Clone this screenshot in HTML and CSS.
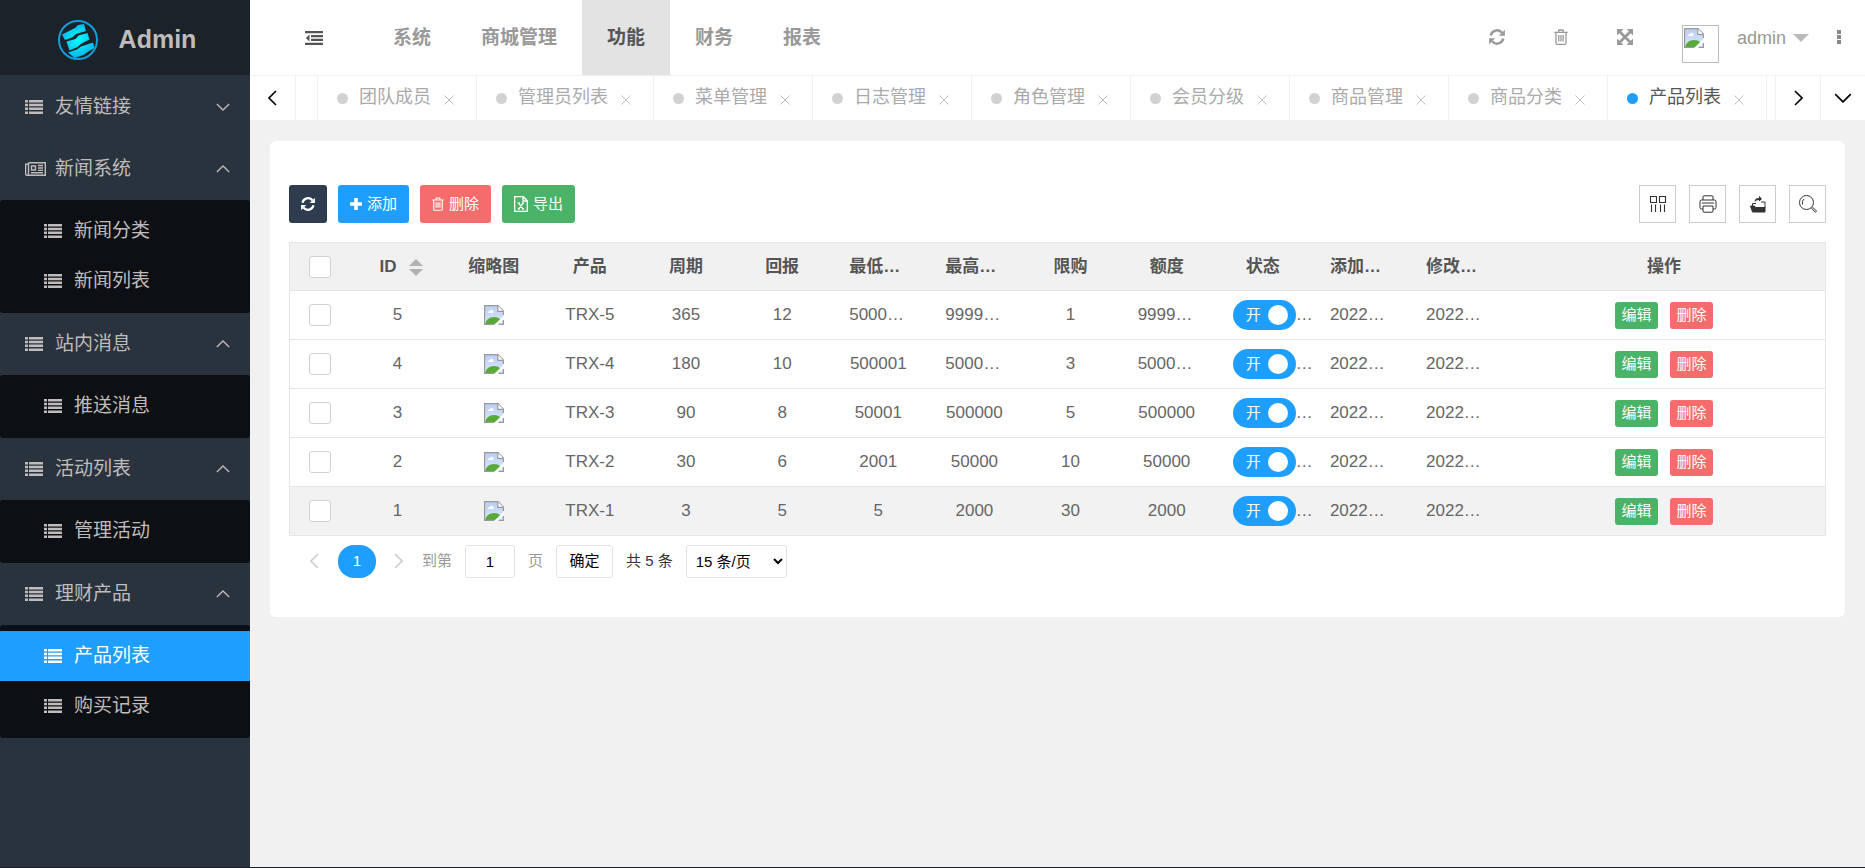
FILE: index.html
```html
<!DOCTYPE html>
<html lang="zh-CN">
<head>
<meta charset="utf-8">
<title>Admin</title>
<link rel="stylesheet" href="styles.css">
<script src="app.js" defer></script>
</head>
<body>
<svg class="defs" aria-hidden="true">
  <defs>
    <linearGradient id="sky" x1="0" y1="0" x2="0" y2="1"><stop offset="0" stop-color="#b9cdf5"/><stop offset="1" stop-color="#dfe8fa"/></linearGradient>
    <radialGradient id="glow" gradientUnits="userSpaceOnUse" cx="21" cy="21" r="18"><stop offset="0" stop-color="#0ff"/><stop offset="1" stop-color="#08b4ea"/></radialGradient>
    <symbol id="list" viewBox="0 0 18 14"><path d="M0 0h3v2.5H0zM4 0h14v2.5H4zM0 3.8h3v2.5H0zM4 3.8h14v2.5H4zM0 7.6h3v2.5H0zM4 7.6h14v2.5H4zM0 11.4h3V14H0zM4 11.4h14V14H4z" fill="currentColor"/></symbol>
    <symbol id="news" viewBox="0 0 21 14"><path d="M3.500.7h16.800v12.600H2a1.400 1.400 0 0 1-1.400-1.400V2.300h2.900M3.500.7v11.200A1.400 1.400 0 0 1 2 13.300M6.500 4h4v4h-4zM13 3.500h5M13 6h5M13 8.400h5M6 10.800h12" fill="none" stroke="currentColor" stroke-width="1.400"/></symbol>
    <symbol id="broken" viewBox="0 0 20 20"><path d="M.6.600H14l5.400 5.400v13.400H.6z" fill="url(#sky)"/><path d="M4 8q0-2 2-2 1-2 2.500-1Q10 6 9.500 8z" fill="#fff"/><path d="M1 19q2-7 9-7 4 0 6 2v5z" fill="#56ab37"/><path d="M19.400 10V6L14 .6H.6v18.800H19.400V15" fill="none" stroke="#999" stroke-width="1.200"/><path d="M13.800.800v5.500h5.500" fill="#fff" stroke="#999" stroke-width="1.200"/><path d="M10 20 20 10.500V14l-6 6z" fill="#fff"/></symbol>
    <symbol id="refresh" viewBox="0 0 16 16"><path d="M1.700 6.500A6.500 6.500 0 0 1 13 3.700M14.300 9.500A6.500 6.500 0 0 1 3 12.300" fill="none" stroke="currentColor" stroke-width="2.500"/><path d="M15.900.800v6h-6zM.1 15.200v-6h6z" fill="currentColor"/></symbol>
    <symbol id="trash" viewBox="0 0 14 16"><path d="M.3 3.400h13.400M4.400 3.400 5 1h4l.6 2.400M2 3.400v10.700q0 1.200 1.200 1.200h7.600q1.200 0 1.200-1.200V3.400M4.800 6v6.500M7 6v6.500M9.200 6v6.500" fill="none" stroke="currentColor" stroke-width="1.300"/></symbol>
    <symbol id="expand" viewBox="0 0 16 16"><path d="M0 0h6.500L0 6.500zM16 0v6.500L9.500 0zM0 16V9.500L6.500 16zM16 16H9.500L16 9.500z" fill="currentColor"/><path d="m2 2 12 12M14 2 2 14" stroke="currentColor" stroke-width="2.800"/></symbol>
    <symbol id="down" viewBox="0 0 16 9"><path d="m1 1 7 7 7-7" fill="none" stroke="currentColor" stroke-width="1.500"/></symbol>
    <symbol id="up" viewBox="0 0 16 9"><path d="m1 8 7-7 7 7" fill="none" stroke="currentColor" stroke-width="1.500"/></symbol>
    <symbol id="left" viewBox="0 0 9 16"><path d="M8 1 1 8l7 7" fill="none" stroke="currentColor" stroke-width="1.600"/></symbol>
    <symbol id="right" viewBox="0 0 9 16"><path d="m1 1 7 7-7 7" fill="none" stroke="currentColor" stroke-width="1.600"/></symbol>
    <symbol id="close" viewBox="0 0 11 11"><path d="m.5.5 10 10m0-10-10 10" stroke="currentColor"/></symbol>
  </defs>
</svg>
<div class="app">
  <aside class="side">
    <div class="brand">
      <svg class="logo" viewBox="0 0 42 42" aria-hidden="true"><circle cx="21" cy="21" r="19" fill="none" stroke="#0e9fdc" stroke-width="2"/><g fill="url(#glow)"><path d="M5 15.500 18 9l3-3 6-1 2 7-10 3-4 3.500-7 2.500z"/><path d="m9.500 22.500 9-2.500 3-3.500 9-2.500 2 6.500-8 4-4 3.500-8 3.500z"/><path d="m11 33.500 9-3 4-3 12-4 1.500 5.500-7 4-4 3-9 3z"/></g></svg>
      <span>Admin</span>
    </div>
    <nav class="menu" aria-label="侧边菜单">
      <button class="group"><svg class="i-list"><use href="#list"/></svg><span>友情链接</span><svg class="fold"><use href="#down"/></svg></button>
      <button class="group"><svg class="i-news"><use href="#news"/></svg><span>新闻系统</span><svg class="fold"><use href="#up"/></svg></button>
      <div class="sub"><a href="#"><svg class="i-list"><use href="#list"/></svg>新闻分类</a><a href="#"><svg class="i-list"><use href="#list"/></svg>新闻列表</a></div>
      <button class="group"><svg class="i-list"><use href="#list"/></svg><span>站内消息</span><svg class="fold"><use href="#up"/></svg></button>
      <div class="sub"><a href="#"><svg class="i-list"><use href="#list"/></svg>推送消息</a></div>
      <button class="group"><svg class="i-list"><use href="#list"/></svg><span>活动列表</span><svg class="fold"><use href="#up"/></svg></button>
      <div class="sub"><a href="#"><svg class="i-list"><use href="#list"/></svg>管理活动</a></div>
      <button class="group"><svg class="i-list"><use href="#list"/></svg><span>理财产品</span><svg class="fold"><use href="#up"/></svg></button>
      <div class="sub"><a href="#" class="on"><svg class="i-list"><use href="#list"/></svg>产品列表</a><a href="#"><svg class="i-list"><use href="#list"/></svg>购买记录</a></div>
    </nav>
  </aside>
  <div class="main">
    <header class="top">
      <button class="collapse" aria-label="收起菜单"><svg width="18" height="14" viewBox="0 0 18 14"><path d="M0 0h18v2.300H0zM6 4h12v2.200H6zM6 7.800h12V10H6zM0 11.700h18V14H0zM4.500 3.600v6.800L.8 7z" fill="currentColor"/></svg></button>
      <nav class="topnav" aria-label="主导航"><a href="#">系统</a><a href="#">商城管理</a><a href="#" class="on">功能</a><a href="#">财务</a><a href="#">报表</a></nav>
      <div class="tools">
        <button aria-label="刷新"><svg width="16" height="16"><use href="#refresh"/></svg></button>
        <button aria-label="清理"><svg width="14" height="16"><use href="#trash"/></svg></button>
        <button aria-label="全屏"><svg width="16" height="16"><use href="#expand"/></svg></button>
      </div>
      <button class="user"><span class="avatar"><svg width="20" height="20"><use href="#broken"/></svg></span><span>admin</span><i class="caret"></i></button>
      <button class="more" aria-label="更多"><i></i><i></i><i></i></button>
    </header>
    <div class="tabs">
      <button class="step" aria-label="向左"><svg width="9" height="16"><use href="#left"/></svg></button>
      <div class="strip" id="strip"></div>
      <button class="step" aria-label="向右"><svg width="9" height="16"><use href="#right"/></svg></button>
      <button class="step" aria-label="标签菜单"><svg width="18" height="10"><use href="#down"/></svg></button>
    </div>
    <main class="content">
      <section class="card">
        <div class="bar">
          <button class="btn dark" aria-label="刷新表格"><svg width="14" height="14"><use href="#refresh"/></svg></button>
          <button class="btn blue"><svg width="12" height="12" viewBox="0 0 12 12"><path d="M4.200 0h3.600v4.200H12v3.600H7.800V12H4.200V7.800H0V4.200h4.200z" fill="currentColor"/></svg>添加</button>
          <button class="btn red"><svg width="12" height="14"><use href="#trash"/></svg>删除</button>
          <button class="btn green"><svg width="14" height="16" viewBox="0 0 14 16"><path d="M.7.700h8.600l4 4v10.600H.7zM9 .7V5h4.300M4.500 7.200l4.500 5.600M9 7.200l-4.500 5.600M3.800 7h2M8 7h2M3.800 13h2M8 13h2" fill="none" stroke="currentColor" stroke-width="1.300"/></svg>导出</button>
          <div class="acts">
            <button aria-label="筛选列"><svg width="18" height="18" viewBox="0 0 18 18"><path d="M1.500 1.500h6v6h-6zM10.500 1.500h6v6h-6zM2.500 9.500V17M6.500 9.500V17M11.500 9.500V17M15.500 9.500V17" fill="none" stroke="currentColor" stroke-width="1.100"/></svg></button>
            <button aria-label="打印"><svg width="18" height="18" viewBox="0 0 18 18"><path d="M4 5V1.800q0-1 1-1h8q1 0 1 1V5M4 14H2.500Q1 14 1 12.500v-6Q1 5 2.500 5h13Q17 5 17 6.500v6q0 1.500-1.500 1.500H14M4 11h10v5q0 1.200-1 1.200H5q-1 0-1-1.200zM3 8h12" fill="none" stroke="currentColor"/></svg></button>
            <button aria-label="导出表格"><svg width="18" height="18" viewBox="0 0 18 18"><path d="M1.500 11h4l1 1.500H16V17H3.500z" fill="currentColor" stroke="currentColor"/><path d="M12 7h4v6M3.500 11V8.500H7" fill="none" stroke="currentColor"/><path d="M5.500 7q0-4 4.500-4V.8L13 4l-3 2.500V5Q7 5 5.500 7z" fill="currentColor"/></svg></button>
            <button aria-label="搜索"><svg width="20" height="20" viewBox="0 0 20 20"><circle cx="8.500" cy="8.500" r="7" fill="none" stroke="currentColor"/><path d="M4.500 10.500Q3.500 7 6 5M13.300 14l4 4.200 1.300-1.200-4.300-4" fill="none" stroke="currentColor"/></svg></button>
          </div>
        </div>
        <table class="grid">
          <colgroup><col class="c-check"><col class="c" span="12"><col></colgroup>
          <thead><tr>
            <th><input type="checkbox" aria-label="全选"></th><th>ID<span class="sort"><i></i><i></i></span></th><th>缩略图</th><th>产品</th><th>周期</th><th>回报</th><th class="cut">最低…</th><th class="cut">最高…</th><th>限购</th><th>额度</th><th>状态</th><th class="cut">添加…</th><th class="cut">修改…</th><th>操作</th>
          </tr></thead>
          <tbody id="rows"></tbody>
        </table>
        <div class="pager">
          <button class="nav" aria-label="上一页"><svg width="9" height="16"><use href="#left"/></svg></button>
          <button class="cur">1</button>
          <button class="nav" aria-label="下一页"><svg width="9" height="16"><use href="#right"/></svg></button>
          <label for="page">到第</label><input id="page" type="text" value="1"><span>页</span>
          <button class="go">确定</button><span class="total">共 5 条</span>
          <select aria-label="每页条数"><option>15 条/页</option></select>
        </div>
      </section>
    </main>
  </div>
</div>
</body>
</html>
```
FILE: styles.css
```css
* { box-sizing: border-box; }
body { margin: 0; font-family: "Liberation Sans", "Noto Sans CJK SC", sans-serif; font-size: 17px; line-height: 24px; color: #666; background: #f1f1f1; }
button, input, select { font: inherit; color: inherit; }
button { margin: 0; padding: 0; border: 0; background: none; cursor: pointer; }
a { color: inherit; text-decoration: none; }
svg { display: block; flex: none; }
.defs { position: absolute; width: 0; height: 0; }
.app { display: flex; min-height: 100vh; border-bottom: 1px solid #1b232a; }

.side { flex: none; width: 250px; background: #28333e; color: #c0bcbb; font-size: 19px; }
.brand { display: flex; align-items: center; justify-content: center; gap: 20px; height: 75px; padding: 2px 0 0 3px; background: #1b2229; font-size: 25px; font-weight: bold; }
.logo { width: 42px; height: 42px; margin-top: 2px; }
.menu { padding-top: 1px; }
.group { display: flex; align-items: center; width: 100%; height: 62px; padding: 0 20px 0 25px; text-align: left; }
.group span { flex: 1; }
.i-list { width: 18px; height: 14px; margin-right: 12px; }
.i-news { width: 21px; height: 14px; margin-right: 9px; }
.fold { width: 14px; height: 8px; }
.sub { padding: 6px 0 7px; border-radius: 3px; background: #0c0f13; }
.sub a { display: flex; align-items: center; height: 50px; padding-left: 44px; }
.sub .on { background: #1e9fff; color: #fff; }

.main { flex: 1; min-width: 0; }
.top { display: flex; align-items: center; height: 75px; background: #fff; color: #999; }
.collapse { margin: 0 45px 0 55px; color: #555; }
.topnav { display: flex; align-self: stretch; flex: 1; font-size: 19px; font-weight: bold; }
.topnav a { display: flex; align-items: center; padding: 0 25px; }
.topnav .on { background: #e3e3e3; color: #555; }
.tools { display: flex; gap: 49px; margin-right: 49px; padding-bottom: 2px; }
.user { display: flex; align-items: center; gap: 7px; color: #999; font-size: 18px; }
.avatar { width: 37px; height: 38px; margin: 12px 11px 0 0; padding: 2px 1px; border: 1px solid #bbb; }
.caret { border: 8px solid transparent; border-top-color: #bbb; border-bottom: 0; }
.more { display: grid; gap: 1px; margin: 0 24px 2px 28px; }
.more i { width: 4px; height: 4px; background: #888; }

.tabs { display: flex; height: 45px; border-top: 1px solid #f1f1f1; background: #fff; }
.step { display: flex; align-items: center; justify-content: center; flex: none; width: 45px; border-right: 1px solid #f1f1f1; color: #000; }
.step:first-child { width: 46px; }
.step:last-child { width: 44px; border-right: 0; }
.strip { display: flex; flex: 1; min-width: 0; overflow: hidden; padding-left: 21px; border-right: 1px solid #f1f1f1; }
.tab { display: flex; align-items: center; flex: none; border-right: 1px solid #f1f1f1; padding: 0 22px 0 19px; color: #aaa; font-size: 18px; }
.tab:first-child { border-left: 1px solid #f1f1f1; }
.tab::before { content: ""; width: 11px; height: 11px; margin-right: 11px; border-radius: 50%; background: #d2d2d2; }
.tab a { padding-bottom: 2px; }
.tab button { margin: 3px 0 0 13px; color: #bbb; }
.tab svg { width: 10px; height: 10px; }
.tab.on { color: #555; }
.tab.on::before { background: #1e9fff; }

.content { padding: 21px 20px; }
.card { padding: 44px 19px 31px; border-radius: 6px; background: #fff; }
.bar { display: flex; gap: 11px; margin-bottom: 19px; }
.btn { display: flex; align-items: center; gap: 5px; height: 38px; padding: 0 12px; border-radius: 3px; color: #fff; font-size: 15px; }
.dark { background: #2d3c4f; }
.blue { background: #1e9fff; }
.red { background: #f56c6c; }
.green { background: #4bb368; }
.acts { display: flex; gap: 13px; margin-left: auto; }
.acts button { display: flex; align-items: center; justify-content: center; width: 37px; height: 38px; border: 1px solid #ccc; color: #333; }

.grid { width: 100%; table-layout: fixed; border-collapse: collapse; border: 1px solid #e6e6e6; }
.c-check { width: 60px; }
.c { width: 6.26%; }
.grid th, .grid td { height: 49px; padding: 0; text-align: center; white-space: nowrap; border-bottom: 1px solid #e6e6e6; }
.grid th { height: 48px; }
.grid thead { background: #f1f1f1; color: #555; }
.grid tbody tr:last-child { background: #f2f2f2; }
.grid .cut { padding-left: 19px; text-align: left; }
.grid input[type="checkbox"] { appearance: none; display: block; width: 22px; height: 22px; margin: 0 auto; border: 1px solid #d2d2d2; border-radius: 3px; background: #fff; }
.grid .pic svg { margin: 0 auto; }
.grid .state { padding-left: 18px; text-align: left; }
.sort { display: inline-grid; gap: 3px; margin: 0 -7px 0 12px; vertical-align: middle; }
.sort i { border: 7px solid transparent; border-top: 0; border-bottom-color: #b2b2b2; }
.sort i + i { border-top: 7px solid #b2b2b2; border-bottom: 0; }
.switch { display: flex; align-items: center; }
.grid .switch input { position: absolute; opacity: 0; }
.switch span { display: flex; flex: none; align-items: center; justify-content: space-between; width: 63px; height: 30px; padding: 0 8px 0 13px; border-radius: 15px; background: #1e9fff; color: #fff; font-size: 15px; }
.switch span::after { content: ""; width: 20px; height: 20px; border-radius: 50%; background: #fff; }
.ops { display: flex; justify-content: center; gap: 12px; }
.ops button { width: 43px; height: 27px; border-radius: 3px; color: #fff; font-size: 15px; }

.pager { display: flex; align-items: center; gap: 13px; height: 50px; padding-left: 21px; font-size: 15px; color: #999; }
.pager .nav { width: 9px; margin-right: 6px; color: #ccc; }
.pager .cur { width: 38px; height: 33px; margin-right: 5px; border-radius: 16px; background: #1e9fff; color: #fff; }
.pager input, .pager .go, .pager select { height: 33px; border: 1px solid #e2e2e2; border-radius: 3px; background: #fff; color: #000; }
.pager input { width: 50px; text-align: center; }
.pager .go { width: 57px; }
.pager .total { color: #333; }
.pager select { width: 101px; padding: 0 5px; }
```
FILE: app.js
```js
const titles = ["团队成员", "管理员列表", "菜单管理", "日志管理", "角色管理", "会员分级", "商品管理", "商品分类", "产品列表"];
document.getElementById("strip").innerHTML = titles.map((t, i) =>
  `<div class="tab${i === titles.length - 1 ? " on" : ""}"><a href="#">${t}</a><button aria-label="关闭${t}"><svg><use href="#close"/></svg></button></div>`
).join("");

const products = [
  [5, "TRX-5", 365, 12, "5000…", "9999…", 1, "9999…"],
  [4, "TRX-4", 180, 10, "500001", "5000…", 3, "5000…"],
  [3, "TRX-3", 90, 8, "50001", "500000", 5, "500000"],
  [2, "TRX-2", 30, 6, "2001", "50000", 10, "50000"],
  [1, "TRX-1", 3, 5, "5", "2000", 30, "2000"]
];
const cell = v => `<td${String(v).endsWith("…") ? ' class="cut"' : ""}>${v}</td>`;
document.getElementById("rows").innerHTML = products.map(([id, ...rest]) => `<tr>
  <td><input type="checkbox" aria-label="选择 ${id}"></td><td>${id}</td>
  <td class="pic"><svg width="20" height="20"><use href="#broken"/></svg></td>
  ${rest.map(cell).join("")}
  <td class="state"><label class="switch"><input type="checkbox" checked><span>开</span>…</label></td>
  ${cell("2022…")}${cell("2022…")}
  <td><div class="ops"><button class="green">编辑</button><button class="red">删除</button></div></td>
</tr>`).join("");
```
